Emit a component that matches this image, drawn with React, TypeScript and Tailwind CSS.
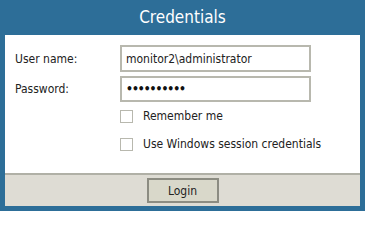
const font = { fontFamily: '"DejaVu Sans Condensed", "Liberation Sans", sans-serif' };

export default function App() {
  return (
    <div className="flex h-[211px] w-[365px] flex-col bg-[#2d6e98] px-[5px] pb-[5px]" style={font}>
      <div className="flex h-[35px] items-center justify-center text-[17px] text-white">Credentials</div>
      <div className="flex flex-1 flex-col bg-white">
        <div className="grid flex-1 grid-cols-[105px_191px] content-start gap-y-[4px] pl-[10px] pt-[10px] text-[12px] text-[#222]">
          <label className="flex h-[27px] items-center">User name:</label>
          <div className="flex h-[27px] items-center border-2 border-[#b8b8ae] pl-[4px]">monitor2\administrator</div>
          <label className="flex h-[26px] items-center">Password:</label>
          <div className="flex h-[26px] items-center border-2 border-[#b8b8ae] pl-[4px] text-[12px] font-bold tracking-[-1px] text-[#111]">••••••••••</div>
          <div className="col-start-2 flex h-[20px] items-center gap-[10px] whitespace-nowrap">
            <span className="h-[13px] w-[13px] shrink-0 border border-[#b8b8ae]" />
            <span>Remember me</span>
          </div>
          <div className="col-start-2 mt-[4px] flex h-[20px] items-center gap-[10px] whitespace-nowrap">
            <span className="h-[13px] w-[13px] shrink-0 border border-[#b8b8ae]" />
            <span>Use Windows session credentials</span>
          </div>
        </div>
        <div className="flex h-[33px] items-center justify-center border-t-2 border-[#b0b0a6] bg-[#dedcd4]">
          <button className="h-[25px] w-[72px] border-2 border-[#8c8c82] bg-[#d9d8ca] text-[12px] text-[#222]">Login</button>
        </div>
      </div>
    </div>
  );
}
